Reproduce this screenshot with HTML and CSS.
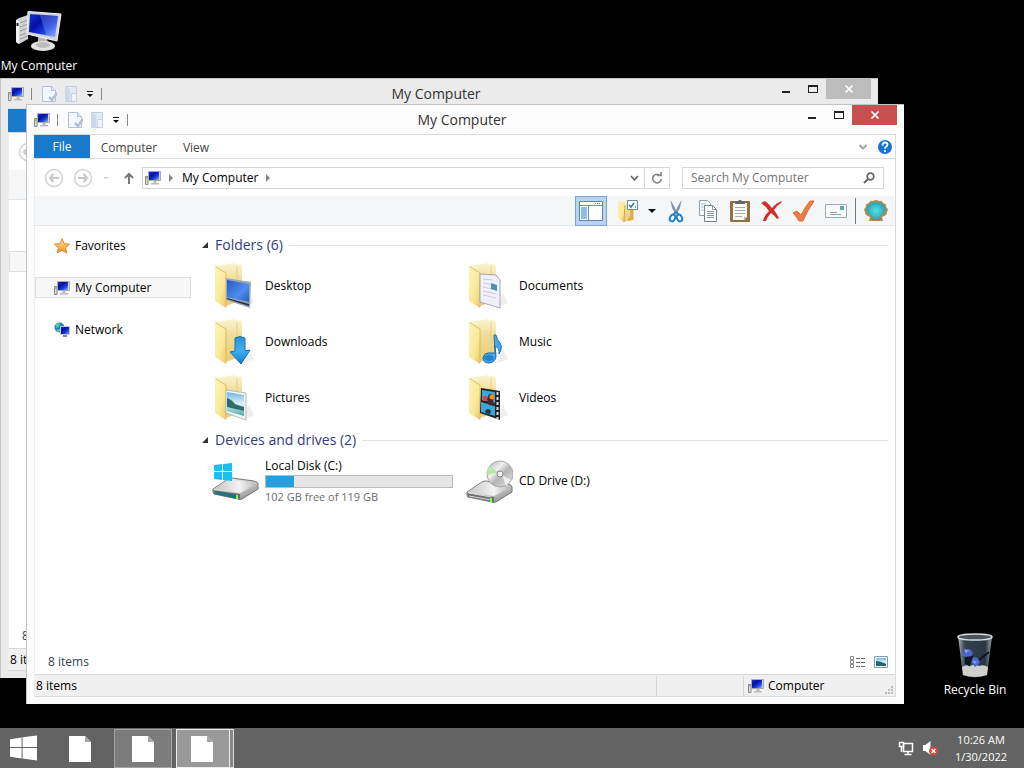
FILE: index.html
```html
<!DOCTYPE html>
<html lang="en">
    <head>
        <meta charset="utf-8">
        <title>My Computer</title>
        <meta name="viewport" content="width=device-width, initial-scale=1.0">
        <link rel="stylesheet" href="styles.css">
    </head>
    <body>
        <!-- shared icons -->
        <svg class="sprite" aria-hidden="true">
            <defs>
                <linearGradient id="g-screen" x1="0" y1="0" x2="1" y2="1">
                    <stop offset="0" stop-color="#1a35d8"/><stop offset=".35" stop-color="#0410a0"/>
                    <stop offset=".65" stop-color="#1c3ce0"/><stop offset="1" stop-color="#8fb0ff"/>
                </linearGradient>
                <linearGradient id="g-metal" x1="0" y1="0" x2="1" y2="1">
                    <stop offset="0" stop-color="#fafafa"/><stop offset=".6" stop-color="#c4c4c4"/><stop offset="1" stop-color="#6f6f6f"/>
                </linearGradient>
                <linearGradient id="g-lid" x1="0" y1="0" x2="1" y2="0">
                    <stop offset="0" stop-color="#c4c4c4"/><stop offset=".6" stop-color="#f4f4f4"/><stop offset="1" stop-color="#b4b4b4"/>
                </linearGradient>
                <linearGradient id="g-front" x1="0" y1="0" x2="1" y2="1">
                    <stop offset="0" stop-color="#fcf3bd"/><stop offset=".6" stop-color="#f9e998"/><stop offset="1" stop-color="#ecc761"/>
                </linearGradient>
                <linearGradient id="g-back" x1="0" y1="0" x2="0" y2="1">
                    <stop offset="0" stop-color="#fbf6d2"/><stop offset=".4" stop-color="#efdc94"/><stop offset="1" stop-color="#e9cd74"/>
                </linearGradient>
                <linearGradient id="g-blue" x1="0" y1="0" x2="0" y2="1">
                    <stop offset="0" stop-color="#2f8fd0"/><stop offset=".5" stop-color="#3fb0f0"/><stop offset="1" stop-color="#1078cc"/>
                </linearGradient>
                <linearGradient id="g-desk" x1="0" y1="0" x2="1" y2="1">
                    <stop offset="0" stop-color="#2b5cc0"/><stop offset=".6" stop-color="#4f8df0"/><stop offset="1" stop-color="#2a5cc4"/>
                </linearGradient>
                <linearGradient id="g-sky" x1="0" y1="0" x2="0" y2="1">
                    <stop offset="0" stop-color="#6fb4ea"/><stop offset=".5" stop-color="#dff1fa"/><stop offset="1" stop-color="#4aa6a0"/>
                </linearGradient>
                <linearGradient id="g-star" x1="0" y1="0" x2="0" y2="1">
                    <stop offset="0" stop-color="#fff3a0"/><stop offset="1" stop-color="#f08a1c"/>
                </linearGradient>
                <linearGradient id="g-disc" x1="0" y1="0" x2="1" y2="1">
                    <stop offset="0" stop-color="#a8a8a8"/><stop offset=".35" stop-color="#f0f0f0"/><stop offset=".55" stop-color="#b4b4b4"/><stop offset="1" stop-color="#e8e8e8"/>
                </linearGradient>
                <linearGradient id="g-bin" x1="0" y1="0" x2="1" y2="0">
                    <stop offset="0" stop-color="#a9b4bb"/><stop offset=".2" stop-color="#33424f"/><stop offset=".8" stop-color="#2a3742"/><stop offset="1" stop-color="#98a4ab"/>
                </linearGradient>
                <radialGradient id="g-shell"><stop offset="0" stop-color="#5fe8ea"/><stop offset="1" stop-color="#1ea2b0"/></radialGradient>
            </defs>
            <symbol id="i-pc" viewBox="0 0 16 16">
                <path d="M.5 6.500h2.500v8h-2.500z" fill="#ddd" stroke="#888"/>
                <path d="M1 8h1.500" stroke="#6a6"/>
                <path d="M3.500 1.500h12v9h-12z" fill="#d4d4d8" stroke="#aaa"/>
                <path d="M4 2h10v8H4z" fill="url(#g-screen)"/>
                <path d="M8.500 11h3v2h2.500v1.500H6V13h2.500z" fill="#bbb"/>
            </symbol>
            <symbol id="i-pc-big" viewBox="0 0 48 48">
                <path d="M1 14l3-2 9-3v24L4 38l-3-2z" fill="#d2d2d2"/>
                <path d="M1 14l3 1v23l-3-2z" fill="#f1f1f1"/>
                <path d="M5 17l8-3M5 21l8-3M5 25l8-3M5 29l8-2M5 33l8-3" stroke="#999"/>
                <path d="M2.500 17v3" stroke="#222" stroke-width="2"/>
                <path d="M23 31h9l1 8h-10z" fill="#b5b5b5"/>
                <ellipse cx="28" cy="40" rx="12" ry="5" fill="#e4e4e4"/>
                <ellipse cx="28" cy="39" rx="7" ry="3" fill="#bdbdbd"/>
                <path d="M13 5.500l33 2.500-4 27-30-7z" fill="#d0d3da" stroke="#f5f5f5"/>
                <path d="M15 8l28 2-3 21-26-5z" fill="url(#g-screen)"/>
                <path d="M25 9l18 1-3 21-9-2z" fill="#9ab8ff" opacity=".3"/>
            </symbol>
            <symbol id="i-props" viewBox="0 0 16 18">
                <path d="M1.500 1.500h9l4 4v11h-13z" fill="#f4f7fd" stroke="#b2c0d8"/>
                <path d="M10.500 1.500v4h4" fill="#dbe4f4" stroke="#b2c0d8"/>
                <path d="M8 12l3 3 5-7" fill="none" stroke="#b3bed2" stroke-width="2.500"/>
            </symbol>
            <symbol id="i-newfolder" viewBox="0 0 16 18">
                <path d="M2.500 1.500h11v15h-11z" fill="#e2e9f6" stroke="#c0cce2"/>
                <path d="M2 1l5 3v13l-5-1z" fill="#cdd8ec"/>
                <path d="M8.500 8.500h5v8h-5z" fill="#eef2fb" stroke="#c5d0e4"/>
            </symbol>
            <symbol id="i-folder" viewBox="0 0 48 48">
                <path d="M32 45l11-4-5-10z" fill="#ddd" opacity=".5"/>
                <path d="M4 4l18-3 9 2v35l-16 6z" fill="url(#g-back)"/>
                <path d="M26 4v36" stroke="#e2c878" opacity=".7"/>
                <path d="M4 4l11 7-1 19 1 16L4 39z" fill="url(#g-front)"/>
                <path d="M4.500 4.500L15 11v34" fill="none" stroke="#d6b55c" stroke-width=".8"/>
            </symbol>
            <symbol id="i-disk" viewBox="0 0 48 24">
                <path d="M2 12L17 2q2-1 4-1l22 3q4 1 4 3v5L31 22q-2 1-4 0L3 17q-1-1-1-2z" fill="url(#g-metal)" stroke="#777"/>
                <path d="M3 12L18 2l28 5-17 9z" fill="url(#g-lid)"/>
                <path d="M2 13l27 4v5L3 17z" fill="#6d7071"/>
            </symbol>
            <symbol id="i-windows" viewBox="0 0 28 26">
                <path d="M0 4l12-2v10H0zM13 1.800L28 0v12H13zM0 13h12v11L0 22zM13 13h15v13l-15-2z" fill="currentColor"/>
            </symbol>
            <symbol id="i-page" viewBox="0 0 22 26">
                <path d="M0 0h16l6 6v20H0z" fill="#fff"/>
                <path d="M16 0v6h6z" fill="#a5a5a5"/>
            </symbol>
            <symbol id="i-back" viewBox="0 0 20 20">
                <circle cx="10" cy="10" r="8.500" fill="none" stroke="#d2d2d2" stroke-width="1.500"/>
                <path d="M15 10H6M9.500 6L6 10l3.500 4" fill="none" stroke="#c8c8c8" stroke-width="2"/>
            </symbol>
            <symbol id="i-menu" viewBox="0 0 8 8">
                <path d="M1 1h6v1H1zM1 4h6L4 7z" fill="#111"/>
            </symbol>
            <symbol id="i-min" viewBox="0 0 12 12"><path d="M2 8h8v2H2z" fill="#222"/></symbol>
            <symbol id="i-max" viewBox="0 0 12 12"><path d="M1 2h10v8H1zM2 4v5h8V4z" fill="#222" fill-rule="evenodd"/></symbol>
            <symbol id="i-close" viewBox="0 0 12 12"><path d="M2.500 2.500l7 7M9.500 2.500l-7 7" stroke="#fff" stroke-width="1.700"/></symbol>
        </svg>

        <main class="desktop">
            <a class="shortcut shortcut-pc" href="#computer">
                <svg class="icon48"><use href="#i-pc-big"/></svg>
                <span>My Computer</span>
            </a>
            <a class="shortcut shortcut-bin" href="#bin">
                <svg class="icon48" viewBox="0 0 48 48">
                    <path d="M7 4h34l-5 39q-12 5-24 0z" fill="url(#g-bin)"/>
                    <path d="M11 35q4-3 8-1 5-3 9 0 5-2 9 1l-1 8q-12 4-24 0z" fill="#cfcfcb"/>
                    <path d="M12 20q3-5 8-2l2 3-3 5-7-2zM19 29l3-4 5 1 2 5-5 4z" fill="#4a66d0"/>
                    <path d="M13 17l5 2-3 2zM22 28l4 2-3 2z" fill="#8ea4ee"/>
                    <path d="M15 26l6-1-3 8-3-2zM28 28l10-8" fill="#0d1822" stroke="#0d1822" stroke-width="2"/>
                    <ellipse cx="24" cy="5" rx="17" ry="3" fill="#48545e" stroke="#d4dadd" stroke-width="1.500"/>
                </svg>
                <span>Recycle Bin</span>
            </a>

            <!-- background window -->
            <section class="window window-back" aria-label="My Computer (inactive)">
                <header class="titlebar">
                    <div class="quick">
                        <svg class="icon16"><use href="#i-pc"/></svg>
                        <span class="bar"></span>
                        <button type="button" aria-label="Properties"><svg class="icon18"><use href="#i-props"/></svg></button>
                        <button type="button" aria-label="New folder"><svg class="icon18"><use href="#i-newfolder"/></svg></button>
                        <button type="button" aria-label="Customize"><svg class="icon8"><use href="#i-menu"/></svg></button>
                        <span class="bar"></span>
                    </div>
                    <h2>My Computer</h2>
                    <div class="controls">
                        <button type="button" aria-label="Minimize"><svg class="icon12"><use href="#i-min"/></svg></button>
                        <button type="button" aria-label="Maximize"><svg class="icon12"><use href="#i-max"/></svg></button>
                        <button type="button" class="close" aria-label="Close"><svg class="icon12"><use href="#i-close"/></svg></button>
                    </div>
                </header>
                <div class="frame">
                    <nav class="tabs"><button type="button" class="file" aria-label="File"></button></nav>
                    <div class="navrow">
                        <button type="button" class="round" aria-label="Back"><svg class="icon20"><use href="#i-back"/></svg></button>
                    </div>
                    <div class="toolbar"></div>
                    <div class="content">
                        <nav class="sidebar"><ul>
                            <li></li>
                            <li class="selected"></li>
                        </ul></nav>
                    </div>
                    <div class="details"><span>8 items</span></div>
                    <footer class="status"><span class="status-text">8 items</span></footer>
                </div>
            </section>

            <!-- active window -->
            <section class="window window-front" id="computer" aria-label="My Computer">
                <header class="titlebar">
                    <div class="quick">
                        <svg class="icon16"><use href="#i-pc"/></svg>
                        <span class="bar"></span>
                        <button type="button" aria-label="Properties"><svg class="icon18"><use href="#i-props"/></svg></button>
                        <button type="button" aria-label="New folder"><svg class="icon18"><use href="#i-newfolder"/></svg></button>
                        <button type="button" aria-label="Customize"><svg class="icon8"><use href="#i-menu"/></svg></button>
                        <span class="bar"></span>
                    </div>
                    <h1>My Computer</h1>
                    <div class="controls">
                        <button type="button" aria-label="Minimize"><svg class="icon12"><use href="#i-min"/></svg></button>
                        <button type="button" aria-label="Maximize"><svg class="icon12"><use href="#i-max"/></svg></button>
                        <button type="button" class="close" aria-label="Close"><svg class="icon12"><use href="#i-close"/></svg></button>
                    </div>
                </header>
                <div class="frame">
                    <nav class="tabs">
                        <button type="button" class="file">File</button>
                        <button type="button" class="tab tab-wide">Computer</button>
                        <button type="button" class="tab">View</button>
                        <span class="spacer"></span>
                        <button type="button" aria-label="Expand the ribbon"><svg class="icon12" viewBox="0 0 12 12"><path d="M2.500 4L6 7.500 9.500 4" fill="none" stroke="#a4a4a4" stroke-width="2"/></svg></button>
                        <button type="button" class="help" aria-label="Help"><svg class="icon16" viewBox="0 0 16 16">
                            <circle cx="8" cy="8" r="7" fill="#1673d2"/>
                            <path d="M5.500 6.500q0-3 2.500-3t2.500 2.300q0 1.200-1.500 2-1 .6-1 1.900M8 11.200v1.800" fill="none" stroke="#fff" stroke-width="1.800"/>
                        </svg></button>
                    </nav>
                    <div class="navrow">
                        <button type="button" class="round" aria-label="Back"><svg class="icon20"><use href="#i-back"/></svg></button>
                        <button type="button" class="round" aria-label="Forward"><svg class="icon20 flip"><use href="#i-back"/></svg></button>
                        <button type="button" class="recent" aria-label="Recent locations"><svg class="icon8" viewBox="0 0 8 8"><path d="M1 3h6L4 5z" fill="#ccc"/></svg></button>
                        <button type="button" class="up" aria-label="Up"><svg class="icon12" viewBox="0 0 12 12"><path d="M6 12V2M2 6l4-4 4 4" fill="none" stroke="#777" stroke-width="2"/></svg></button>
                        <div class="address">
                            <svg class="icon16"><use href="#i-pc"/></svg>
                            <svg class="icon8 crumb" viewBox="0 0 8 8"><path d="M2 0l4 4-4 4z" fill="#888"/></svg>
                            <a href="#computer">My Computer</a>
                            <svg class="icon8 crumb" viewBox="0 0 8 8"><path d="M2 0l4 4-4 4z" fill="#888"/></svg>
                            <span class="spacer"></span>
                            <button type="button" class="history" aria-label="Previous locations"><svg class="icon12" viewBox="0 0 12 12"><path d="M3 4l3.500 4L10 4" fill="none" stroke="#666" stroke-width="1.700"/></svg></button>
                            <button type="button" class="refresh" aria-label="Refresh"><svg class="icon12" viewBox="0 0 12 12"><path d="M9.500 4A4.300 4.300 0 1 0 10.300 7M6 3.500h4V0" fill="none" stroke="#888" stroke-width="1.700"/></svg></button>
                        </div>
                        <label class="search">
                            <input type="text" placeholder="Search My Computer" aria-label="Search My Computer">
                            <svg class="icon12" viewBox="0 0 12 12"><circle cx="7.500" cy="4.500" r="3.300" fill="none" stroke="#666" stroke-width="1.700"/><path d="M5 7l-4 4" stroke="#666" stroke-width="2"/></svg>
                        </label>
                    </div>
                    <div class="toolbar">
                        <button type="button" class="tool pressed" aria-label="Navigation pane"><svg class="icon24" viewBox="0 0 24 24">
                            <path d="M.5 2.500h23v19H.5z" fill="#fff" stroke="#5f84b0"/>
                            <path d="M1 6.500h22M9.500 7v14" stroke="#6c8fb8"/>
                            <path d="M2 8h6v12H2z" fill="#8fbdf0"/>
                            <path d="M16 4.500h1m1 0h1m1 0h1" stroke="#4a7cb4"/>
                        </svg></button>
                        <button type="button" class="tool" aria-label="Folder options"><svg class="icon24" viewBox="0 0 24 24">
                            <path d="M2 3l7-2 9 1v18l-10 3z" fill="url(#g-back)"/>
                            <path d="M2 2l7 4-1 17-6-4z" fill="url(#g-front)"/>
                            <path d="M9 6l-1 17" stroke="#d2a948"/>
                            <path d="M12 20q4-4 2-9h3v10l-5 1z" fill="#e0ae3c"/>
                            <path d="M11.500 1.500h10v9h-10z" fill="#fff" stroke="#638aa8"/>
                            <path d="M13 6l2 2 3-4M19 8h1" fill="none" stroke="#2a78a8" stroke-width="1.500"/>
                        </svg></button>
                        <button type="button" class="tool-drop" aria-label="More options"><svg class="icon8" viewBox="0 0 8 8"><path d="M0 2h8L4 6z" fill="#111"/></svg></button>
                        <button type="button" class="tool" aria-label="Cut"><svg class="icon24" viewBox="0 0 24 24">
                            <path d="M6.500 1L10 7l4 8-2 1-4-7zM17.500 1L14 7l-4 8 2 1 4-7z" fill="#8794a4"/>
                            <ellipse cx="8.500" cy="19" rx="2.500" ry="3.500" fill="none" stroke="#2383c8" stroke-width="2" transform="rotate(25 8.500 19)"/>
                            <ellipse cx="15.500" cy="19" rx="2.500" ry="3.500" fill="none" stroke="#2383c8" stroke-width="2" transform="rotate(-25 15.500 19)"/>
                            <path d="M9 16l3-3 3 3" fill="none" stroke="#2383c8" stroke-width="2"/>
                        </svg></button>
                        <button type="button" class="tool" aria-label="Copy"><svg class="icon24" viewBox="0 0 24 24">
                            <path d="M3.500 1.500h8l3 3v12h-11z" fill="#fff" stroke="#8b9db4"/>
                            <path d="M5 5h5M5 8h4M5 11h4" stroke="#a3b4c8"/>
                            <path d="M8.500 6.500h8l4 4v12h-12z" fill="#fff" stroke="#70849f"/>
                            <path d="M16.500 6.500v4h4M11 12.500h7M11 14.500h7M11 16.500h7M11 18.500h7" fill="none" stroke="#8299b4"/>
                        </svg></button>
                        <button type="button" class="tool" aria-label="Paste"><svg class="icon24" viewBox="0 0 24 24">
                            <rect x="2" y="2" width="20" height="21" rx="1" fill="#96703f"/>
                            <path d="M5 4h14v14l-3 3H5z" fill="#fafafa"/>
                            <path d="M7 8.500h10M7 11.500h10M7 14.500h10M7 17.500h7" stroke="#aaa"/>
                            <path d="M19 18h-3v3z" fill="#bbb"/>
                            <path d="M7 4q0-2 3-2 2-2 4 0 3 0 3 2v1H7z" fill="#666"/>
                        </svg></button>
                        <button type="button" class="tool" aria-label="Delete"><svg class="icon24" viewBox="0 0 24 24">
                            <path d="M1 4l4-2q4 3 7 7 4-5 10-7l-1 2q-5 3-7 7 3 4 5 8l-2 1q-3-4-6-6-3 3-5 8H3q1-5 6-10Q6 7 1 4z" fill="#d0302a"/>
                        </svg></button>
                        <button type="button" class="tool" aria-label="Rename"><svg class="icon24" viewBox="0 0 24 24">
                            <path d="M1 14l4-2 4 4Q13 8 18 2h4Q15 12 11 22H7Q5 18 1 14z" fill="#f07c40" stroke="#e07038"/>
                        </svg></button>
                        <button type="button" class="tool" aria-label="E-mail"><svg class="icon24" viewBox="0 0 24 24">
                            <path d="M1.500 5.500h21v13h-21z" fill="#fafcfd" stroke="#99abb6"/>
                            <path d="M16 7h4v4h-4z" fill="#5aa8a0"/>
                            <path d="M6 13.500h7M6 15.500h11" stroke="#8ea4b2"/>
                        </svg></button>
                        <span class="divider"></span>
                        <button type="button" class="tool shell" aria-label="Shell"><svg class="icon24" viewBox="0 0 24 24">
                            <path d="M9 2q3-2 6 0 3-1 4 2 4 1 3 4 3 2 1 5 0 3-3 4l-2 1 1 4H5l1-4-2-1q-3-1-3-4-2-3 1-5-1-3 3-4 1-3 4-2z" fill="#b58a52"/>
                            <path d="M12 3q8 0 9.500 8-1 5-6.500 6l2 4H7l2-4q-5.500-1-6.500-6Q4 3 12 3z" fill="url(#g-shell)"/>
                            <path d="M12 17V4M10.500 17L7.500 5M13.500 17l3-12M9 16L4 9M15 16l5-7" stroke="#3fc4cc" opacity=".6"/>
                        </svg></button>
                    </div>
                    <div class="content">
                        <nav class="sidebar" aria-label="Places">
                            <ul>
                                <li><a href="#favorites"><svg class="icon16" viewBox="0 0 16 16"><path d="M8 .7l2.200 5 5.300.5-4 3.500 1.200 5.300L8 12.200 3.300 15l1.200-5.300-4-3.500 5.300-.5z" fill="url(#g-star)" stroke="#df8424"/></svg>Favorites</a></li>
                                <li class="selected"><a href="#computer"><svg class="icon16"><use href="#i-pc"/></svg>My Computer</a></li>
                                <li><a href="#network"><svg class="icon16" viewBox="0 0 16 16"><circle cx="5.500" cy="5.500" r="5" fill="#2783c9"/><path d="M2 2q3-2 4 0L5 5 2 6zM2 8l4-1 1 2-3 1z" fill="#55c88c"/><path d="M6.500 4.500h9v8h-9z" fill="url(#g-screen)" stroke="#c0c8dd"/><path d="M9 13h4v2H9z" fill="#88a"/></svg>Network</a></li>
                            </ul>
                        </nav>
                        <div class="files">
                            <h2 class="group"><svg class="icon8" viewBox="0 0 8 8"><path d="M7 1v6H1z" fill="#333"/></svg>Folders (6)</h2>
                            <ul class="items">
                                <li><svg class="icon48" viewBox="0 0 48 48"><use href="#i-folder"/>
                                    <path d="M15 16l25 4-1 26-24-8z" fill="#9aa7b3"/><path d="M16 18l22 4v18l-22-5z" fill="url(#g-desk)"/><path d="M16 36l22 6v2l-22-7z" fill="#243248"/>
                                </svg><span>Desktop</span></li>
                                <li><svg class="icon48" viewBox="0 0 48 48"><use href="#i-folder"/>
                                    <path d="M15 12l16 1 4 5v28l-20-6z" fill="#f1f0fa" stroke="#a4a4b4"/><path d="M18 17l10 1M18 21l7 1M18 25l9 2M18 29l13 3M18 33l13 3" stroke="#cdcbe0"/><path d="M26 21l6 2v6l-6-2z" fill="#4a91b0"/>
                                </svg><span>Documents</span></li>
                                <li><svg class="icon48" viewBox="0 0 48 48"><use href="#i-folder"/>
                                    <path d="M24 20q5-3 10 0v13l5-1-9 14-11-12 5-1z" fill="url(#g-blue)" stroke="#1671b4"/>
                                </svg><span>Downloads</span></li>
                                <li><svg class="icon48" viewBox="0 0 48 48"><use href="#i-folder"/>
                                    <path d="M29 17h2q1 5 4 8 3 5-1 11 1-6-4-8l1 10q0 6-7 7-6 0-6-5 1-6 9-5h3z" fill="#4ba8e8" stroke="#1b6cb0"/>
                                    <ellipse cx="24" cy="40" rx="5" ry="3" fill="#1c84d0"/>
                                </svg><span>Music</span></li>
                                <li><svg class="icon48" viewBox="0 0 48 48"><use href="#i-folder"/>
                                    <path d="M15 16l20 3v27l-20-7z" fill="#f4f6f6" stroke="#b4bcc0"/><path d="M16 18l17 3v21l-17-5z" fill="url(#g-sky)"/><path d="M16 24q4 1 8 6 5 2 9 3v4l-17-4z" fill="#2d6d70"/>
                                </svg><span>Pictures</span></li>
                                <li><svg class="icon48" viewBox="0 0 48 48"><use href="#i-folder"/>
                                    <path d="M16 14l19 3v29l-20-7z" fill="#222"/><path d="M17 16l13 2v11l-13-3zM16 28l14 4v10l-14-4z" fill="#38a7dc"/><path d="M18 22h4v5h-4z" fill="#e33c59"/><path d="M22 25l2-5 5 1-1 6 2 5-6-1z" fill="#492b22"/><circle cx="27" cy="23" r="2.500" fill="#df9a21"/><path d="M20 37q3-4 6 0l-1 3-4-1z" fill="#234"/><path d="M32.500 18v27" stroke="#ddd" stroke-width="2" stroke-dasharray="3 2"/>
                                </svg><span>Videos</span></li>
                            </ul>
                            <h2 class="group"><svg class="icon8" viewBox="0 0 8 8"><path d="M7 1v6H1z" fill="#333"/></svg>Devices and drives (2)</h2>
                            <ul class="items">
                                <li><svg class="icon48" viewBox="0 0 48 48"><use href="#i-disk" x="0" y="20" width="48" height="24"/>
                                    <path d="M4 34l22 4v4L4 37z" fill="#23737f"/><path d="M26 38v4" stroke="#7f4" stroke-width="2"/>
                                    <path d="M3 8l8-1v7H3zM12 7l9-1v8h-9zM3 15h8v8l-8-1zM12 15h9v9l-9-1z" fill="#16c0f3"/>
                                </svg>
                                <div class="drive">
                                    <label for="disk-c">Local Disk (C:)</label>
                                    <meter id="disk-c" min="0" max="119" value="18">102 GB free of 119 GB</meter>
                                    <small>102 GB free of 119 GB</small>
                                </div></li>
                                <li><svg class="icon48" viewBox="0 0 48 48"><use href="#i-disk" x="0" y="23" width="48" height="24"/>
                                    <path d="M4 36l22 4M4 39l22 4" stroke="#ddd"/><path d="M26 41v4" stroke="#7f4" stroke-width="2"/>
                                    <circle cx="35" cy="17" r="13" fill="url(#g-disc)" stroke="#aaa"/><path d="M33 15L24 9q-3 5-1 9z" fill="#bde5a8"/><path d="M37 18l9 5-5 6z" fill="#fff" opacity=".7"/><circle cx="35" cy="17" r="3" fill="#eee" stroke="#888"/>
                                </svg><span>CD Drive (D:)</span></li>
                            </ul>
                        </div>
                    </div>
                    <div class="details">
                        <span>8 items</span>
                        <button type="button" aria-label="Details view"><svg class="icon16" viewBox="0 0 16 16">
                            <path d="M.5 2.500h3v3h-3zM.5 6.500h3v3h-3zM.5 10.500h3v3h-3z" fill="#fff" stroke="#888"/>
                            <path d="M6 4.500h4m1 0h4M6 8.500h4m1 0h4M6 12.500h4m1 0h4" stroke="#666"/>
                        </svg></button>
                        <button type="button" aria-label="Large icons view"><svg class="icon16" viewBox="0 0 16 16">
                            <path d="M1.500 2.500h13v11h-13z" fill="#fff" stroke="#78a0b0"/><path d="M3 4h10v8H3z" fill="url(#g-sky)"/><path d="M3 7q4 0 10 3v2H3z" fill="#22676f"/>
                        </svg></button>
                    </div>
                    <footer class="status">
                        <span class="status-text">8 items</span>
                        <span class="status-empty"></span>
                        <span class="status-zone"><svg class="icon16"><use href="#i-pc"/></svg>Computer</span>
                        <svg class="icon12 grip" viewBox="0 0 12 12"><path d="M8 2h2v2H8zM5 5h2v2H5zM8 5h2v2H8zM2 8h2v2H2zM5 8h2v2H5zM8 8h2v2H8z" fill="#bbb"/></svg>
                    </footer>
                </div>
            </section>
        </main>

        <footer class="taskbar">
            <button type="button" class="start" aria-label="Start"><svg class="logo"><use href="#i-windows"/></svg></button>
            <button type="button" class="task" aria-label="Document"><svg class="page"><use href="#i-page"/></svg></button>
            <button type="button" class="task running" aria-label="Document"><svg class="page"><use href="#i-page"/></svg></button>
            <button type="button" class="task active" aria-label="My Computer"><svg class="page"><use href="#i-page"/></svg></button>
            <span class="stacked"></span>
            <span class="spacer"></span>
            <div class="tray">
                <button type="button" aria-label="Network"><svg class="icon16" viewBox="0 0 16 16">
                    <path d="M5.500 3.500h9v8h-9zM10 12v2M6.500 14.500h7" fill="none" stroke="#fff" stroke-width="1.500"/>
                    <path d="M1.500 2.500h4v4h-4zM3.500 7v5" fill="#666" stroke="#fff" stroke-width="1.500"/>
                </svg></button>
                <button type="button" aria-label="Volume muted"><svg class="icon16" viewBox="0 0 16 16">
                    <path d="M1 5h2.500l5-4v14l-5-4H1z" fill="#fff"/>
                    <circle cx="11.500" cy="11" r="4.500" fill="#d6443c"/>
                    <path d="M9.500 9l4 4M13.500 9l-4 4" stroke="#fff" stroke-width="1.500"/>
                </svg></button>
            </div>
            <div class="clock"><time>10:26 AM</time><time>1/30/2022</time></div>
        </footer>
    </body>
</html>
```
FILE: styles.css
```css
* {
    box-sizing: border-box;
}
body {
    display: flex;
    flex-direction: column;
    height: 100vh;
    margin: 0;
    overflow: hidden;
    background-color: #000;
    color: #000;
    font-family: "Open Sans", "Noto Sans", sans-serif;
    font-size: 12px;
    line-height: 16px;
}
h1, h2, ul {
    margin: 0;
    padding: 0;
    font-weight: normal;
}
ul {
    list-style: none;
}
a {
    color: inherit;
    text-decoration: none;
}
button {
    display: flex;
    align-items: center;
    justify-content: center;
    margin: 0;
    padding: 0;
    border: none;
    background: none;
    color: inherit;
    font: inherit;
}
svg {
    display: block;
    flex: none;
}
.sprite { width: 0; height: 0; }
.icon8 { width: 8px; height: 8px; }
.icon12 { width: 12px; height: 12px; }
.icon16 { width: 16px; height: 16px; }
.icon18 { width: 16px; height: 18px; }
.icon20 { width: 20px; height: 20px; }
.icon24 { width: 24px; height: 24px; }
.icon48 { width: 48px; height: 48px; }
.flip { transform: scaleX(-1); }
.spacer { flex: 1; }

/* desktop */
.desktop {
    position: relative;
    flex: 1;
}
.shortcut {
    position: absolute;
    display: flex;
    flex-direction: column;
    align-items: center;
    width: 80px;
    color: #fff;
}
.shortcut-pc { left: -1px; top: 6px; }
.shortcut-pc span { margin-top: 4px; }
.shortcut-bin { right: 9px; bottom: 30px; }
.shortcut-bin span { margin-top: 2px; }

/* windows */
.window {
    position: absolute;
    display: flex;
    flex-direction: column;
    width: 878px;
    height: 600px;
    padding-bottom: 7px;
    border: 1px solid #c4c4c4;
    border-width: 1px 0 0 1px;
    background-color: #fcfcfc;
}
.window-back { left: 0; top: 78px; background-color: #ebebeb; }
.window-front { left: 26px; top: 104px; }
.titlebar {
    display: grid;
    grid-template-columns: 1fr auto 1fr;
    height: 29px;
    padding-right: 7px;
    color: #333;
}
.titlebar h1, .titlebar h2 {
    align-self: center;
    font-size: 14px;
    line-height: 20px;
}
.quick {
    display: flex;
    align-items: center;
    gap: 7px;
    padding-left: 7px;
}
.bar {
    width: 1px;
    height: 12px;
    background-color: #888;
}
.bar:nth-child(2) {
    margin-right: 2px;
}
.quick button:nth-of-type(2) {
    margin-left: -1px;
}
.controls {
    display: flex;
    justify-content: flex-end;
}
.controls button {
    width: 27px;
    height: 20px;
}
.controls .close {
    width: 45px;
    background-color: #c75050;
}
.window-back .close {
    background-color: #bcbcbc;
}
.frame {
    display: flex;
    flex: 1;
    flex-direction: column;
    margin: 0 8px 0 7px;
    border: 1px solid #dadada;
    border-left-color: #eee;
    background-color: #fff;
}

/* ribbon tabs */
.tabs {
    display: flex;
    height: 24px;
    padding-right: 2px;
    border-bottom: 1px solid #dadada;
    color: #444;
}
.tabs .file {
    width: 56px;
    margin-left: -1px;
    background-color: #1979ca;
    color: #fff;
}
.tab { width: 56px; padding-top: 2px; }
.tab-wide { width: 78px; }
.help { margin-left: 8px; }

/* address row */
.navrow {
    display: flex;
    align-items: center;
    height: 37px;
    padding: 0 11px 0 9px;
}
.round { margin-right: 9px; }
.recent { margin-right: 13px; }
.up { margin-right: 7px; }
.address {
    display: flex;
    flex: 1;
    align-items: center;
    height: 22px;
    margin-right: 12px;
    padding-left: 2px;
    border: 1px solid #d6d6d6;
}
.address .crumb { margin: 0 7px 0 6px; }
.history { width: 20px; }
.refresh {
    width: 25px;
    height: 20px;
    border-left: 1px solid #d6d6d6;
}
.search {
    display: flex;
    align-items: center;
    width: 202px;
    height: 22px;
    padding: 0 8px;
    border: 1px solid #d6d6d6;
}
.search input {
    flex: 1;
    min-width: 0;
    padding: 0;
    border: none;
    outline: none;
    background: none;
    font: inherit;
}
.search input::placeholder {
    color: #757575;
}

/* toolbar */
.toolbar {
    display: flex;
    align-items: center;
    justify-content: flex-end;
    height: 30px;
    padding-right: 3px;
    border-bottom: 1px solid #e4e8ea;
    background-color: #f4f6f8;
}
.tool {
    width: 32px;
    height: 30px;
}
.pressed {
    margin-right: 5px;
    border: 1px solid #7da2ce;
    background-color: #b9d4f2;
}
.tool-drop { width: 16px; }
.divider {
    width: 1px;
    height: 26px;
    margin: 0 4px 0 3px;
    background-color: #777;
}

/* places and files */
.content {
    display: flex;
    flex: 1;
}
.sidebar {
    width: 156px;
    padding-top: 9px;
}
.sidebar li {
    height: 21px;
    margin-bottom: 21px;
    padding-left: 18px;
    border: 1px solid transparent;
}
.sidebar a {
    display: flex;
    align-items: center;
    gap: 5px;
    height: 19px;
}
.sidebar .selected {
    border-color: #dedede;
    background-color: #f7f7f7;
}
.files {
    flex: 1;
    padding: 9px 7px 0 10px;
}
.group {
    display: flex;
    align-items: center;
    gap: 6px;
    height: 20px;
    color: #2f3c7e;
    font-size: 14px;
}
.group::after {
    content: "";
    flex: 1;
    height: 1px;
    background-color: #e2e2e2;
}
.items {
    display: grid;
    grid-template-columns: repeat(auto-fill, 254px);
    grid-auto-rows: 56px;
    margin-bottom: 4px;
    padding: 3px 0 0 10px;
}
.items li {
    display: flex;
    align-items: center;
    gap: 6px;
}
.drive {
    display: flex;
    flex: 1;
    flex-direction: column;
    margin-right: 12px;
}
.drive meter {
    display: block;
    width: 100%;
    height: 13px;
    margin: 1px 0;
    appearance: none;
    border: 1px solid #bcbcbc;
    background: #e6e6e6;
    line-height: 11px;
}
.drive meter::-webkit-meter-inner-element {
    display: block;
    position: static;
    height: 11px;
}
.drive meter::-webkit-meter-bar {
    display: block;
    position: static;
    height: 11px;
    margin: 0;
    border: none;
    border-radius: 0;
    background: #e6e6e6;
    transform: none;
}
.drive meter::-webkit-meter-optimum-value {
    height: 11px;
    background: #26a0da;
}
.drive small {
    color: #6d6d6d;
    font-size: 11px;
}

/* bottom rows */
.details {
    display: flex;
    align-items: center;
    gap: 7px;
    height: 24px;
    padding: 0 6px 0 13px;
    color: #333f50;
}
.details span {
    flex: 1;
}
.status {
    display: flex;
    align-items: center;
    height: 22px;
    border-top: 1px solid #d7d7d7;
    background-color: #f0f0f0;
}
.status-text {
    flex: 1;
    padding-left: 1px;
}
.status-empty {
    width: 88px;
    height: 20px;
    border: 1px solid #d7d7d7;
    border-width: 0 1px;
}
.status-zone {
    display: flex;
    gap: 4px;
    width: 139px;
    padding-left: 4px;
}
.grip { align-self: flex-end; }

/* taskbar */
.taskbar {
    display: flex;
    align-items: center;
    height: 40px;
    background-color: #636363;
    color: #fff;
}
.logo { width: 27px; height: 26px; }
.page { width: 22px; height: 26px; }
.start {
    width: 47px;
    height: 40px;
}
.task {
    width: 58px;
    height: 39px;
    padding-top: 2px;
    margin-right: 4px;
}
.start + .task {
    width: 63px;
    padding-left: 2px;
}
.running {
    border: 1px solid #a4a4a4;
    background-color: #7c7c7c;
}
.active {
    width: 54px;
    margin-right: 0;
    padding-right: 3px;
    border: 1px solid #eee;
    background-color: #999;
}
.stacked {
    width: 4px;
    height: 39px;
    border: 1px solid #ddd;
    border-left: none;
    background-color: #888;
}
.tray {
    display: flex;
    gap: 8px;
}
.clock {
    display: flex;
    flex-direction: column;
    width: 86px;
    align-items: center;
    font-size: 11px;
    line-height: 17px;
}
```
